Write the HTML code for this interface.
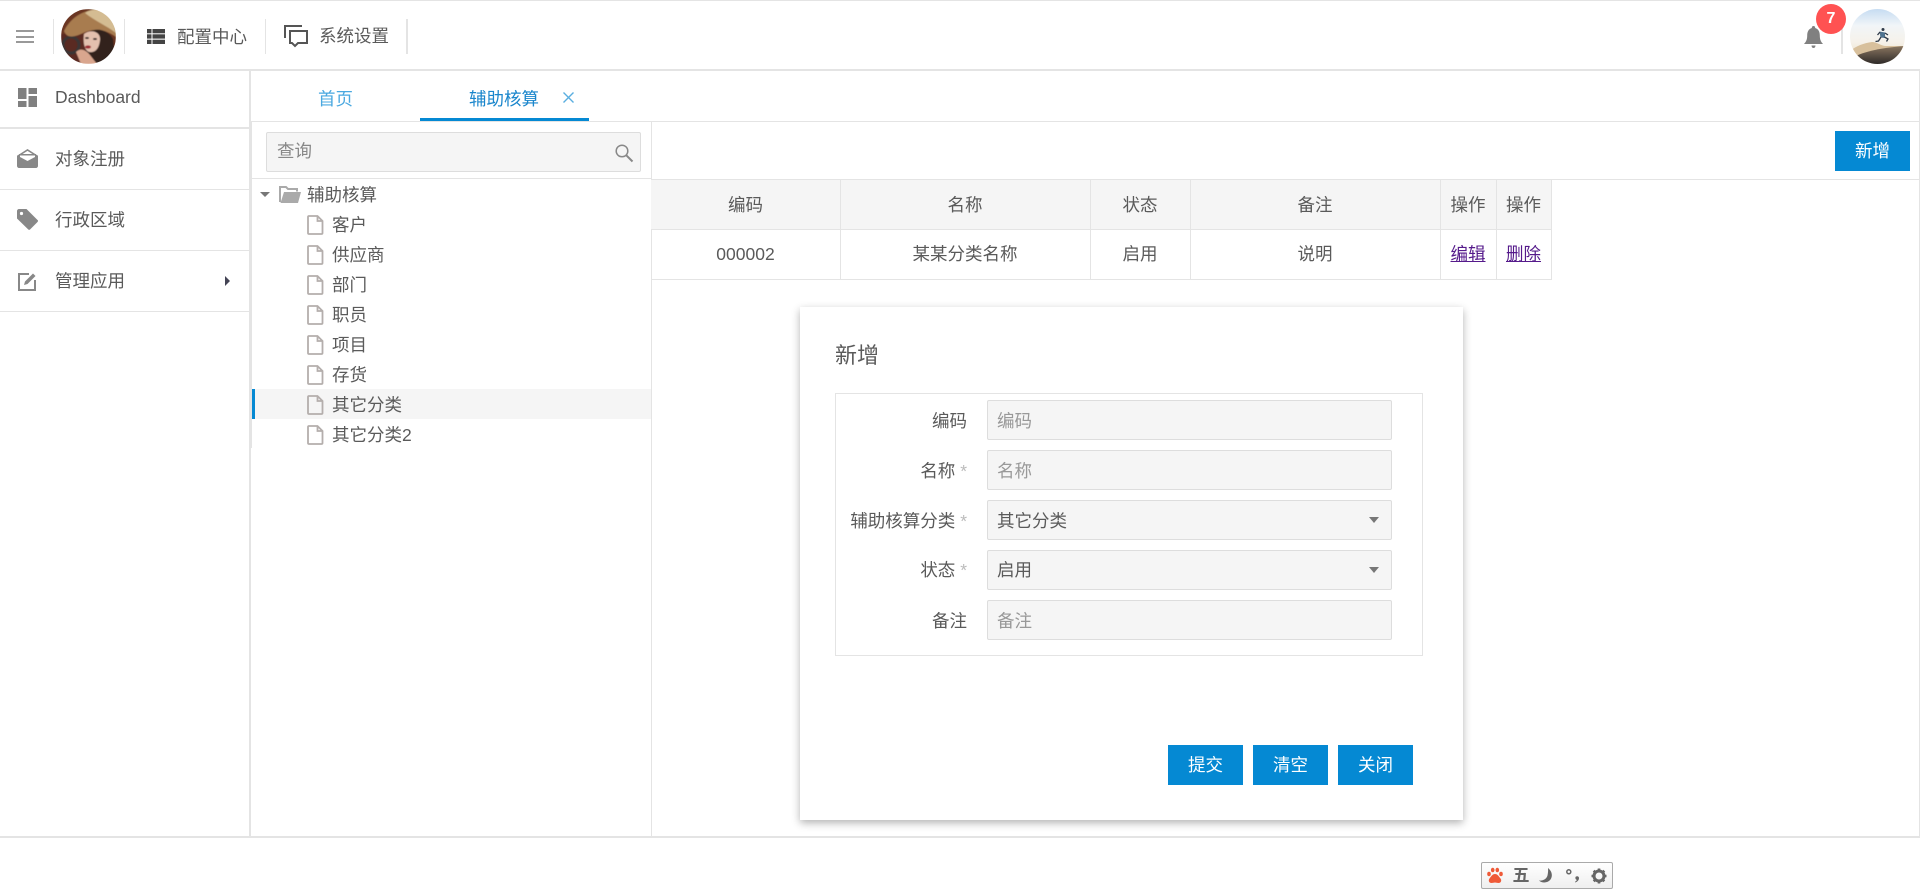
<!DOCTYPE html>
<html lang="zh-CN">
<head>
<meta charset="utf-8">
<title>辅助核算</title>
<style>
html,body{margin:0;padding:0;width:1920px;height:892px;overflow:hidden;background:#fff}
body{position:relative;font-family:"Liberation Sans","Noto Sans CJK SC",sans-serif;font-size:17.5px;color:#5a5a5a}
.a{position:absolute}
.l{position:absolute;background:#e4e4e4}
.t{position:absolute;white-space:nowrap;line-height:24px;height:24px}
.c{text-align:center}
.r{text-align:right}
.in{position:absolute;left:987px;width:403px;height:38px;background:#f5f5f5;border:1px solid #ddd;border-radius:2px}
.btn{position:absolute;background:#0589d3;color:#fff;text-align:center;width:75px;height:40px;line-height:40px}
.ar{position:absolute;width:0;height:0;border-left:5px solid transparent;border-right:5px solid transparent;border-top:6px solid #777}
.ph{color:#999}
.star{color:#bbb}
a{color:#551a8b;text-decoration:underline}
svg{position:absolute;overflow:visible}
</style>
</head>
<body>
<!-- frame lines -->
<div class="l" style="left:0;top:0;width:1920px;height:1px"></div>
<div class="l" style="left:0;top:69px;width:1920px;height:2px"></div>
<div class="l" style="left:249px;top:70px;width:2px;height:768px"></div>
<div class="l" style="left:0;top:836px;width:1920px;height:2px"></div>
<div class="l" style="left:1919px;top:70px;width:1px;height:766px"></div>

<!-- header -->
<div class="a" style="left:16px;top:30px;width:18px;height:2px;background:#999"></div>
<div class="a" style="left:16px;top:36px;width:18px;height:2px;background:#999"></div>
<div class="a" style="left:16px;top:41px;width:18px;height:2px;background:#999"></div>
<div class="l" style="left:53px;top:19px;width:1px;height:35px"></div>
<div class="l" style="left:124px;top:19px;width:1px;height:35px"></div>
<div class="l" style="left:265px;top:19px;width:1px;height:35px"></div>
<div class="l" style="left:406px;top:19px;width:2px;height:35px"></div>

<svg style="left:61px;top:9px" width="55" height="55" viewBox="0 0 55 55">
<defs><clipPath id="c1"><circle cx="27.5" cy="27.5" r="27.5"/></clipPath><filter id="bl"><feGaussianBlur stdDeviation=".6"/></filter></defs>
<g clip-path="url(#c1)"><g filter="url(#bl)">
<rect width="55" height="55" fill="#6b3422"/>
<rect x="0" y="25" width="26" height="30" fill="#5a2c20"/>
<circle cx="10" cy="36" r="8" fill="none" stroke="#3a3434" stroke-width="3"/>
<path d="M3 22C10 8 22 2 35 0L55 4V28C45 20 32 19 22 24C14 28 6 30 3 22Z" fill="#a87c50"/>
<path d="M24 4C32-2 48 0 52 10L55 24C46 17 34 12 24 4Z" fill="#d4bc92"/>
<path d="M26 24C36 17 48 22 52 30L55 55H30L24 48Z" fill="#33241f"/>
<path d="M23 25C29 20 40 22 39 31C38 41 33 44 28 43C23 41 22 32 23 25Z" fill="#e3c0ae"/>
<path d="M15 43C19 39 24 40 29 46L36 55H20Z" fill="#d9a68e"/>
<ellipse cx="27" cy="38" rx="3" ry="1.6" fill="#9c2a30"/>
<ellipse cx="26" cy="29" rx="2" ry="1" fill="#3a2a28"/>
<ellipse cx="34" cy="30" rx="2" ry="1" fill="#3a2a28"/>
</g></g>
</svg>

<svg style="left:147px;top:29px" width="18" height="15" viewBox="0 0 18 15" fill="#444">
<rect x="0" y="0" width="4.500" height="4.300"/><rect x="5.500" y="0" width="12.500" height="4.300"/>
<rect x="0" y="5.300" width="4.500" height="4.300"/><rect x="5.500" y="5.300" width="12.500" height="4.300"/>
<rect x="0" y="10.700" width="4.500" height="4.300"/><rect x="5.500" y="10.700" width="12.500" height="4.300"/>
</svg>
<div class="t" style="left:177px;top:25px">配置中心</div>

<svg style="left:284px;top:25px" width="24" height="23" viewBox="0 0 24 23" fill="none" stroke="#555" stroke-width="2">
<path d="M1 13V1H18"/>
<path d="M6 6H23V18H14L11 21L8 18H6Z"/>
</svg>
<div class="t" style="left:319px;top:24px">系统设置</div>

<svg style="left:1804px;top:26px" width="19" height="22" viewBox="0 0 19 22" fill="#808080">
<path d="M9.500 0C10.600 0 11.200.8 11.200 2C14.600 3 15.800 6 15.800 9.500C15.800 13 16.600 15.500 19 18H0C2.400 15.500 3.200 13 3.200 9.500C3.200 6 4.400 3 7.800 2C7.800.8 8.400 0 9.500 0Z"/>
<path d="M7.500 19.500H11.500C11.500 21 10.600 22 9.500 22C8.400 22 7.500 21 7.500 19.500Z"/>
</svg>
<div class="l" style="left:1841px;top:19px;width:2px;height:35px"></div>
<div class="a" style="left:1816px;top:4px;width:30px;height:30px;border-radius:50%;background:#ff5252;color:#fff;font-weight:bold;font-size:16px;line-height:30px;text-align:center">7</div>

<svg style="left:1850px;top:9px" width="55" height="55" viewBox="0 0 55 55">
<defs>
<clipPath id="c2"><circle cx="27.5" cy="27.5" r="27.5"/></clipPath>
<linearGradient id="sky" x1="0" y1="0" x2="0" y2="1"><stop offset="0" stop-color="#c6dcf2"/><stop offset=".3" stop-color="#f1f5f8"/><stop offset=".6" stop-color="#f6f2ea"/><stop offset="1" stop-color="#e9d8bb"/></linearGradient>
<linearGradient id="gr" x1="0" y1="0" x2="0" y2="1"><stop offset="0" stop-color="#8a7660"/><stop offset="1" stop-color="#2e2a28"/></linearGradient>
</defs>
<g clip-path="url(#c2)">
<rect width="55" height="55" fill="url(#sky)"/>
<path d="M0 42C6 37 14 34 22 33C27 33 31 37 36 37H55V46H0Z" fill="#d8c09c"/>
<path d="M0 50C12 43 28 39 55 37V55H0Z" fill="url(#gr)"/>
<g>
<circle cx="33" cy="20.500" r="1.500" fill="#2f3a48"/>
<path d="M29.500 22.500L35 23.500L35 29L30.500 28.500Z" fill="#4f7390"/>
<path d="M31 28L28.500 32L25.500 32.500M34.500 28L38 30L36.500 32.500M30 23L27.500 26M35 24L38 26" fill="none" stroke="#2f3a48" stroke-width="1.300"/>
</g>
</g>
</svg>

<!-- sidebar -->
<div class="l" style="left:0;top:127px;width:249px;height:2px"></div>
<div class="l" style="left:0;top:189px;width:249px;height:1px"></div>
<div class="l" style="left:0;top:250px;width:249px;height:1px"></div>
<div class="l" style="left:0;top:311px;width:249px;height:1px"></div>

<svg style="left:18px;top:88px" width="19" height="19" viewBox="0 0 19 19" fill="#808080">
<rect x="0" y="0" width="8.500" height="11"/><rect x="0" y="13" width="8.500" height="6"/>
<rect x="10.500" y="0" width="8.500" height="6"/><rect x="10.500" y="8" width="8.500" height="11"/>
</svg>
<div class="t" style="left:55px;top:85px">Dashboard</div>

<svg style="left:17px;top:149px" width="21" height="19" viewBox="0 0 21 19">
<path d="M1 7L10.500 1L20 7" fill="none" stroke="#888" stroke-width="1.600"/>
<path d="M0 6.500H2V5H19V6.500H21V17C21 18 20 19 19 19H2C1 19 0 18 0 17Z" fill="#888"/>
<path d="M3 6.500H18V8L10.500 12L3 8Z" fill="#fff"/>
</svg>
<div class="t" style="left:55px;top:147px">对象注册</div>

<svg style="left:17px;top:209px" width="21" height="21" viewBox="0 0 21 21" fill="#888">
<path d="M0 2C0 .9.9 0 2 0H9.500L21 11.500C21 12 21 12.500 20.500 13L13 20.500C12.500 21 11.800 21 11.300 20.500L0 9.500Z"/>
<circle cx="4.500" cy="4.500" r="1.600" fill="#fff"/>
</svg>
<div class="t" style="left:55px;top:208px">行政区域</div>

<svg style="left:18px;top:272px" width="19" height="19" viewBox="0 0 19 19" fill="none">
<path d="M11 2H1V18H17V8" stroke="#888" stroke-width="2"/>
<path d="M6 13L7 9.500L15 1.500L17.500 4L9.500 12Z" fill="#888"/>
</svg>
<div class="t" style="left:55px;top:269px">管理应用</div>
<div class="a" style="left:225px;top:276px;width:0;height:0;border-top:5px solid transparent;border-bottom:5px solid transparent;border-left:5px solid #445"></div>

<!-- tabs -->
<div class="t c" style="left:288px;top:87px;width:95px;color:#4aa8e0">首页</div>
<div class="t" style="left:469px;top:87px;color:#1a86cc">辅助核算</div>
<svg style="left:563px;top:92px" width="11" height="11" viewBox="0 0 11 11"><path d="M.5 .5L10.500 10.500M10.500 .5L.5 10.500" stroke="#5aaee0" stroke-width="1.400" fill="none"/></svg>
<div class="l" style="left:251px;top:121px;width:1668px;height:1px"></div>
<div class="a" style="left:420px;top:118px;width:169px;height:3px;background:#0589d3"></div>

<!-- tree panel -->
<div class="l" style="left:651px;top:122px;width:1px;height:714px"></div>
<div class="l" style="left:252px;top:178px;width:399px;height:1px"></div>
<div class="a" style="left:266px;top:132px;width:373px;height:38px;background:#f5f5f5;border:1px solid #ddd;border-radius:2px"></div>
<div class="t" style="left:277px;top:139px;color:#888">查询</div>
<svg style="left:615px;top:144px" width="18" height="18" viewBox="0 0 18 18" fill="none" stroke="#888" stroke-width="1.500"><circle cx="7" cy="7" r="5.800"/><path d="M11.200 11.200L17.500 17.500" stroke-width="2"/></svg>

<div class="a" style="left:260px;top:192px;width:0;height:0;border-left:5px solid transparent;border-right:5px solid transparent;border-top:5px solid #777"></div>
<svg style="left:279px;top:186px" width="22" height="17" viewBox="0 0 22 17">
<path d="M1 16V1H7L9 3H18V5.500" fill="none" stroke="#aaa" stroke-width="2"/>
<path d="M1.500 17L5 6H22L19 17Z" fill="#aaa"/>
</svg>
<div class="t" style="left:307px;top:183px">辅助核算</div>

<div class="a" style="left:252px;top:389px;width:399px;height:30px;background:#f5f5f5"></div>
<div class="a" style="left:252px;top:389px;width:3px;height:30px;background:#0589d3"></div>
<div class="l" style="left:251px;top:122px;width:1px;height:326px"></div>

<svg width="0" height="0" style="left:0;top:0"><defs>
<g id="f"><path d="M1 2C1 1.400 1.400 1 2 1H10.500L15.500 6V18C15.500 18.600 15.100 19 14.500 19H2C1.400 19 1 18.600 1 18Z M10.500 1V6H15.500" fill="none" stroke="#b4aeac" stroke-width="1.800"/></g>
</defs></svg>
<svg style="left:306.500px;top:215px" width="17" height="20"><use href="#f"/></svg>
<svg style="left:306.500px;top:245px" width="17" height="20"><use href="#f"/></svg>
<svg style="left:306.500px;top:275px" width="17" height="20"><use href="#f"/></svg>
<svg style="left:306.500px;top:305px" width="17" height="20"><use href="#f"/></svg>
<svg style="left:306.500px;top:335px" width="17" height="20"><use href="#f"/></svg>
<svg style="left:306.500px;top:365px" width="17" height="20"><use href="#f"/></svg>
<svg style="left:306.500px;top:395px" width="17" height="20"><use href="#f"/></svg>
<svg style="left:306.500px;top:425px" width="17" height="20"><use href="#f"/></svg>
<div class="t" style="left:332px;top:213px">客户</div>
<div class="t" style="left:332px;top:243px">供应商</div>
<div class="t" style="left:332px;top:273px">部门</div>
<div class="t" style="left:332px;top:303px">职员</div>
<div class="t" style="left:332px;top:333px">项目</div>
<div class="t" style="left:332px;top:363px">存货</div>
<div class="t" style="left:332px;top:393px">其它分类</div>
<div class="t" style="left:332px;top:423px">其它分类2</div>

<!-- toolbar -->
<div class="btn" style="left:1835px;top:131px">新增</div>
<div class="l" style="left:651px;top:179px;width:1268px;height:1px"></div>

<!-- table -->
<div class="a" style="left:651px;top:180px;width:900px;height:49px;background:#f5f5f5"></div>
<div class="l" style="left:651px;top:229px;width:900px;height:1px"></div>
<div class="l" style="left:651px;top:279px;width:900px;height:1px"></div>
<div class="l" style="left:840px;top:180px;width:1px;height:100px"></div>
<div class="l" style="left:1090px;top:180px;width:1px;height:100px"></div>
<div class="l" style="left:1190px;top:180px;width:1px;height:100px"></div>
<div class="l" style="left:1440px;top:180px;width:1px;height:100px"></div>
<div class="l" style="left:1496px;top:180px;width:1px;height:100px"></div>
<div class="l" style="left:1551px;top:180px;width:1px;height:100px"></div>
<div class="t c" style="left:651px;top:193px;width:189px">编码</div>
<div class="t c" style="left:840px;top:193px;width:250px">名称</div>
<div class="t c" style="left:1090px;top:193px;width:100px">状态</div>
<div class="t c" style="left:1190px;top:193px;width:250px">备注</div>
<div class="t c" style="left:1440px;top:193px;width:56px">操作</div>
<div class="t c" style="left:1496px;top:193px;width:55px">操作</div>
<div class="t c" style="left:651px;top:242px;width:189px">000002</div>
<div class="t c" style="left:840px;top:242px;width:250px">某某分类名称</div>
<div class="t c" style="left:1090px;top:242px;width:100px">启用</div>
<div class="t c" style="left:1190px;top:242px;width:250px">说明</div>
<div class="t c" style="left:1440px;top:242px;width:56px"><a href="#">编辑</a></div>
<div class="t c" style="left:1496px;top:242px;width:55px"><a href="#">删除</a></div>

<!-- modal -->
<div class="a" style="left:800px;top:307px;width:663px;height:513px;background:#fff;box-shadow:0 3px 8px rgba(0,0,0,.3)"></div>
<div class="t" style="left:835px;top:342px;font-size:22px;line-height:28px;height:28px;color:#5a5a5a">新增</div>
<div class="a" style="left:835px;top:393px;width:586px;height:261px;border:1px solid #e4e4e4"></div>

<div class="t r" style="left:840px;top:409px;width:127px">编码</div>
<div class="in" style="top:400px"></div>
<div class="t ph" style="left:997px;top:409px">编码</div>

<div class="t r" style="left:840px;top:459px;width:127px">名称 <span class="star">*</span></div>
<div class="in" style="top:450px"></div>
<div class="t ph" style="left:997px;top:459px">名称</div>

<div class="t r" style="left:840px;top:509px;width:127px">辅助核算分类 <span class="star">*</span></div>
<div class="in" style="top:500px"></div>
<div class="t" style="left:997px;top:509px">其它分类</div>
<div class="ar" style="left:1369px;top:517px"></div>

<div class="t r" style="left:840px;top:558px;width:127px">状态 <span class="star">*</span></div>
<div class="in" style="top:550px"></div>
<div class="t" style="left:997px;top:558px">启用</div>
<div class="ar" style="left:1369px;top:567px"></div>

<div class="t r" style="left:840px;top:609px;width:127px">备注</div>
<div class="in" style="top:600px"></div>
<div class="t ph" style="left:997px;top:609px">备注</div>

<div class="btn" style="left:1168px;top:745px">提交</div>
<div class="btn" style="left:1253px;top:745px">清空</div>
<div class="btn" style="left:1338px;top:745px">关闭</div>

<!-- IME bar -->
<div class="a" style="left:1481px;top:862px;width:130px;height:25px;border:1px solid #aaa;border-radius:2px;background:linear-gradient(#fff,#efefef)"></div>
<svg style="left:1487px;top:867px" width="16" height="17" viewBox="0 0 16 17" fill="#ef5a38">
<ellipse cx="2" cy="7" rx="1.800" ry="2.200"/><ellipse cx="5.700" cy="3" rx="1.800" ry="2.300"/><ellipse cx="10.300" cy="3" rx="1.800" ry="2.300"/><ellipse cx="14" cy="7" rx="1.800" ry="2.200"/>
<path d="M8 7C10.500 7 12 9.500 13.500 11.500C15 13.500 14 16 11.500 16C10 16 9 15.500 8 15.500C7 15.500 6 16 4.500 16C2 16 1 13.500 2.500 11.500C4 9.500 5.500 7 8 7Z"/>
</svg>
<div class="t c" style="left:1510px;top:864px;width:22px;font-size:17px;font-weight:bold;color:#666">五</div>
<svg style="left:1539px;top:868px" width="14" height="15" viewBox="0 0 14 15" fill="#666"><path d="M9 0C13 3 14 8 11.500 11.500C9 15 3 15.500 0 12.500C4 13 7.500 11 8.500 7.500C9 5 9.300 2.500 9 0Z"/></svg>
<svg style="left:1566px;top:869px" width="14" height="14" viewBox="0 0 14 14"><circle cx="2.800" cy="2.800" r="2" fill="none" stroke="#666" stroke-width="1.500"/><path d="M10 7.500C11.500 6.800 13 7.500 13 9C13 11 11.500 12.800 9.300 13.500L9 12.800C10.200 12.200 10.800 11.500 10.800 10.800C9.500 10.800 8.800 8.300 10 7.500Z" fill="#666"/></svg>
<svg style="left:1591px;top:868px" width="16" height="16" viewBox="0 0 16 16"><circle cx="8" cy="8" r="5" fill="none" stroke="#666" stroke-width="3"/><path d="M8 .5V3M8 13V15.500M.5 8H3M13 8H15.500M2.700 2.700L4.500 4.500M11.500 11.500L13.300 13.300M13.300 2.700L11.500 4.500M4.500 11.500L2.700 13.300" stroke="#666" stroke-width="2.600"/></svg>
</body>
</html>
